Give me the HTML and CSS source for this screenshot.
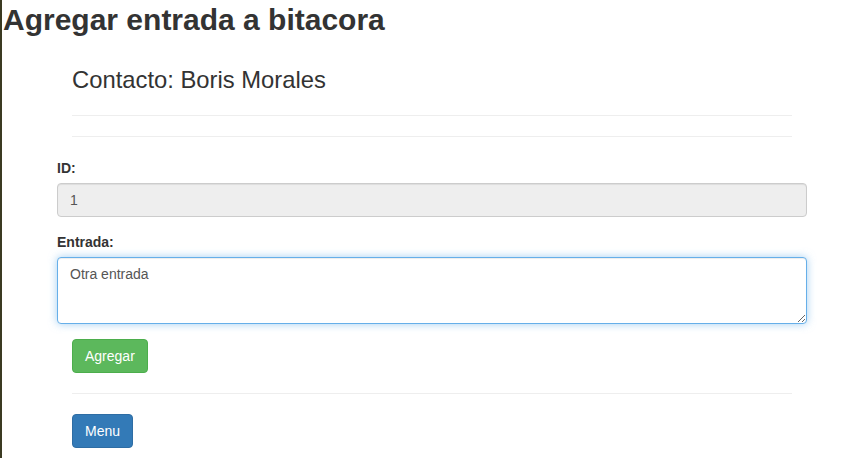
FILE: index.html
```html
<!DOCTYPE html>
<html lang="es">
<head>
<meta charset="utf-8">
<title>Agregar entrada a bitacora</title>
<link rel="stylesheet" href="styles.css">
</head>
<body>
<h1 class="page-title">Agregar entrada a bitacora</h1>
<div class="container">
  <div class="inner">
    <h3 class="contact">Contacto: Boris Morales</h3>
    <hr class="rule rule-first">
    <hr class="rule rule-second">
  </div>
  <form class="form">
    <div class="form-group">
      <label class="label" for="id">ID:</label>
      <input class="control control-readonly" id="id" type="text" value="1" readonly>
    </div>
    <div class="form-group">
      <label class="label" for="entrada">Entrada:</label>
      <textarea class="control control-area" id="entrada" autofocus>Otra entrada</textarea>
    </div>
    <div class="inner">
      <button class="btn btn-success" type="button">Agregar</button>
      <hr class="rule">
      <button class="btn btn-primary" type="button">Menu</button>
    </div>
  </form>
</div>
<script src="script.js"></script>
</body>
</html>
```

FILE: styles.css
```css
html, body {
  margin: 0;
  padding: 0;
  background: #fff;
}
body {
  border-left: 2px solid #3b3a22;
  min-height: 458px;
  box-sizing: border-box;
  font-family: "Liberation Sans", Arial, sans-serif;
  font-size: 14px;
  line-height: 20px;
  color: #333;
}
.page-title {
  margin: 3px 0 0 1px;
  font-size: 30px;
  line-height: 33px;
  font-weight: bold;
  color: #333;
}
.container {
  margin-left: 55px;
  width: 750px;
}
.inner {
  padding: 0 15px;
}
.contact {
  margin: 31px 0 0;
  font-size: 23.8px;
  line-height: 26px;
  font-weight: 500;
}
.rule {
  margin: 20px 0;
  border: 0;
  border-top: 1px solid #eee;
  height: 0;
}
.rule-first {
  margin-top: 22px;
}
.rule-second {
  margin-bottom: 21px;
}
.form-group {
  margin-bottom: 15px;
}
.label {
  display: block;
  margin-bottom: 5px;
  font-weight: bold;
}
.control {
  display: block;
  width: 100%;
  box-sizing: border-box;
  height: 34px;
  padding: 6px 12px;
  font-family: "Liberation Sans", Arial, sans-serif;
  font-size: 14px;
  line-height: 20px;
  color: #555;
  background: #fff;
  border: 1px solid #ccc;
  border-radius: 4px;
  box-shadow: inset 0 1px 1px rgba(0,0,0,.075);
  outline: none;
  margin: 0;
  caret-color: #333;
}
.control-readonly {
  background: #eee;
}
.control-area {
  height: 67px;
  resize: both;
  border-color: #66afe9;
  box-shadow: inset 0 1px 1px rgba(0,0,0,.075), 0 0 8px rgba(102,175,233,.6);
}
.btn {
  display: inline-block;
  padding: 6px 12px;
  font-family: "Liberation Sans", Arial, sans-serif;
  font-size: 14px;
  line-height: 20px;
  border: 1px solid transparent;
  border-radius: 4px;
  color: #fff;
  margin: 0;
  cursor: pointer;
}
.btn-success {
  background: #5cb85c;
  border-color: #4cae4c;
}
.btn-primary {
  background: #337ab7;
  border-color: #2e6da4;
}
```

FILE: script.js
```js
var area = document.getElementById('entrada');
area.focus();
area.setSelectionRange(area.value.length, area.value.length);
```
